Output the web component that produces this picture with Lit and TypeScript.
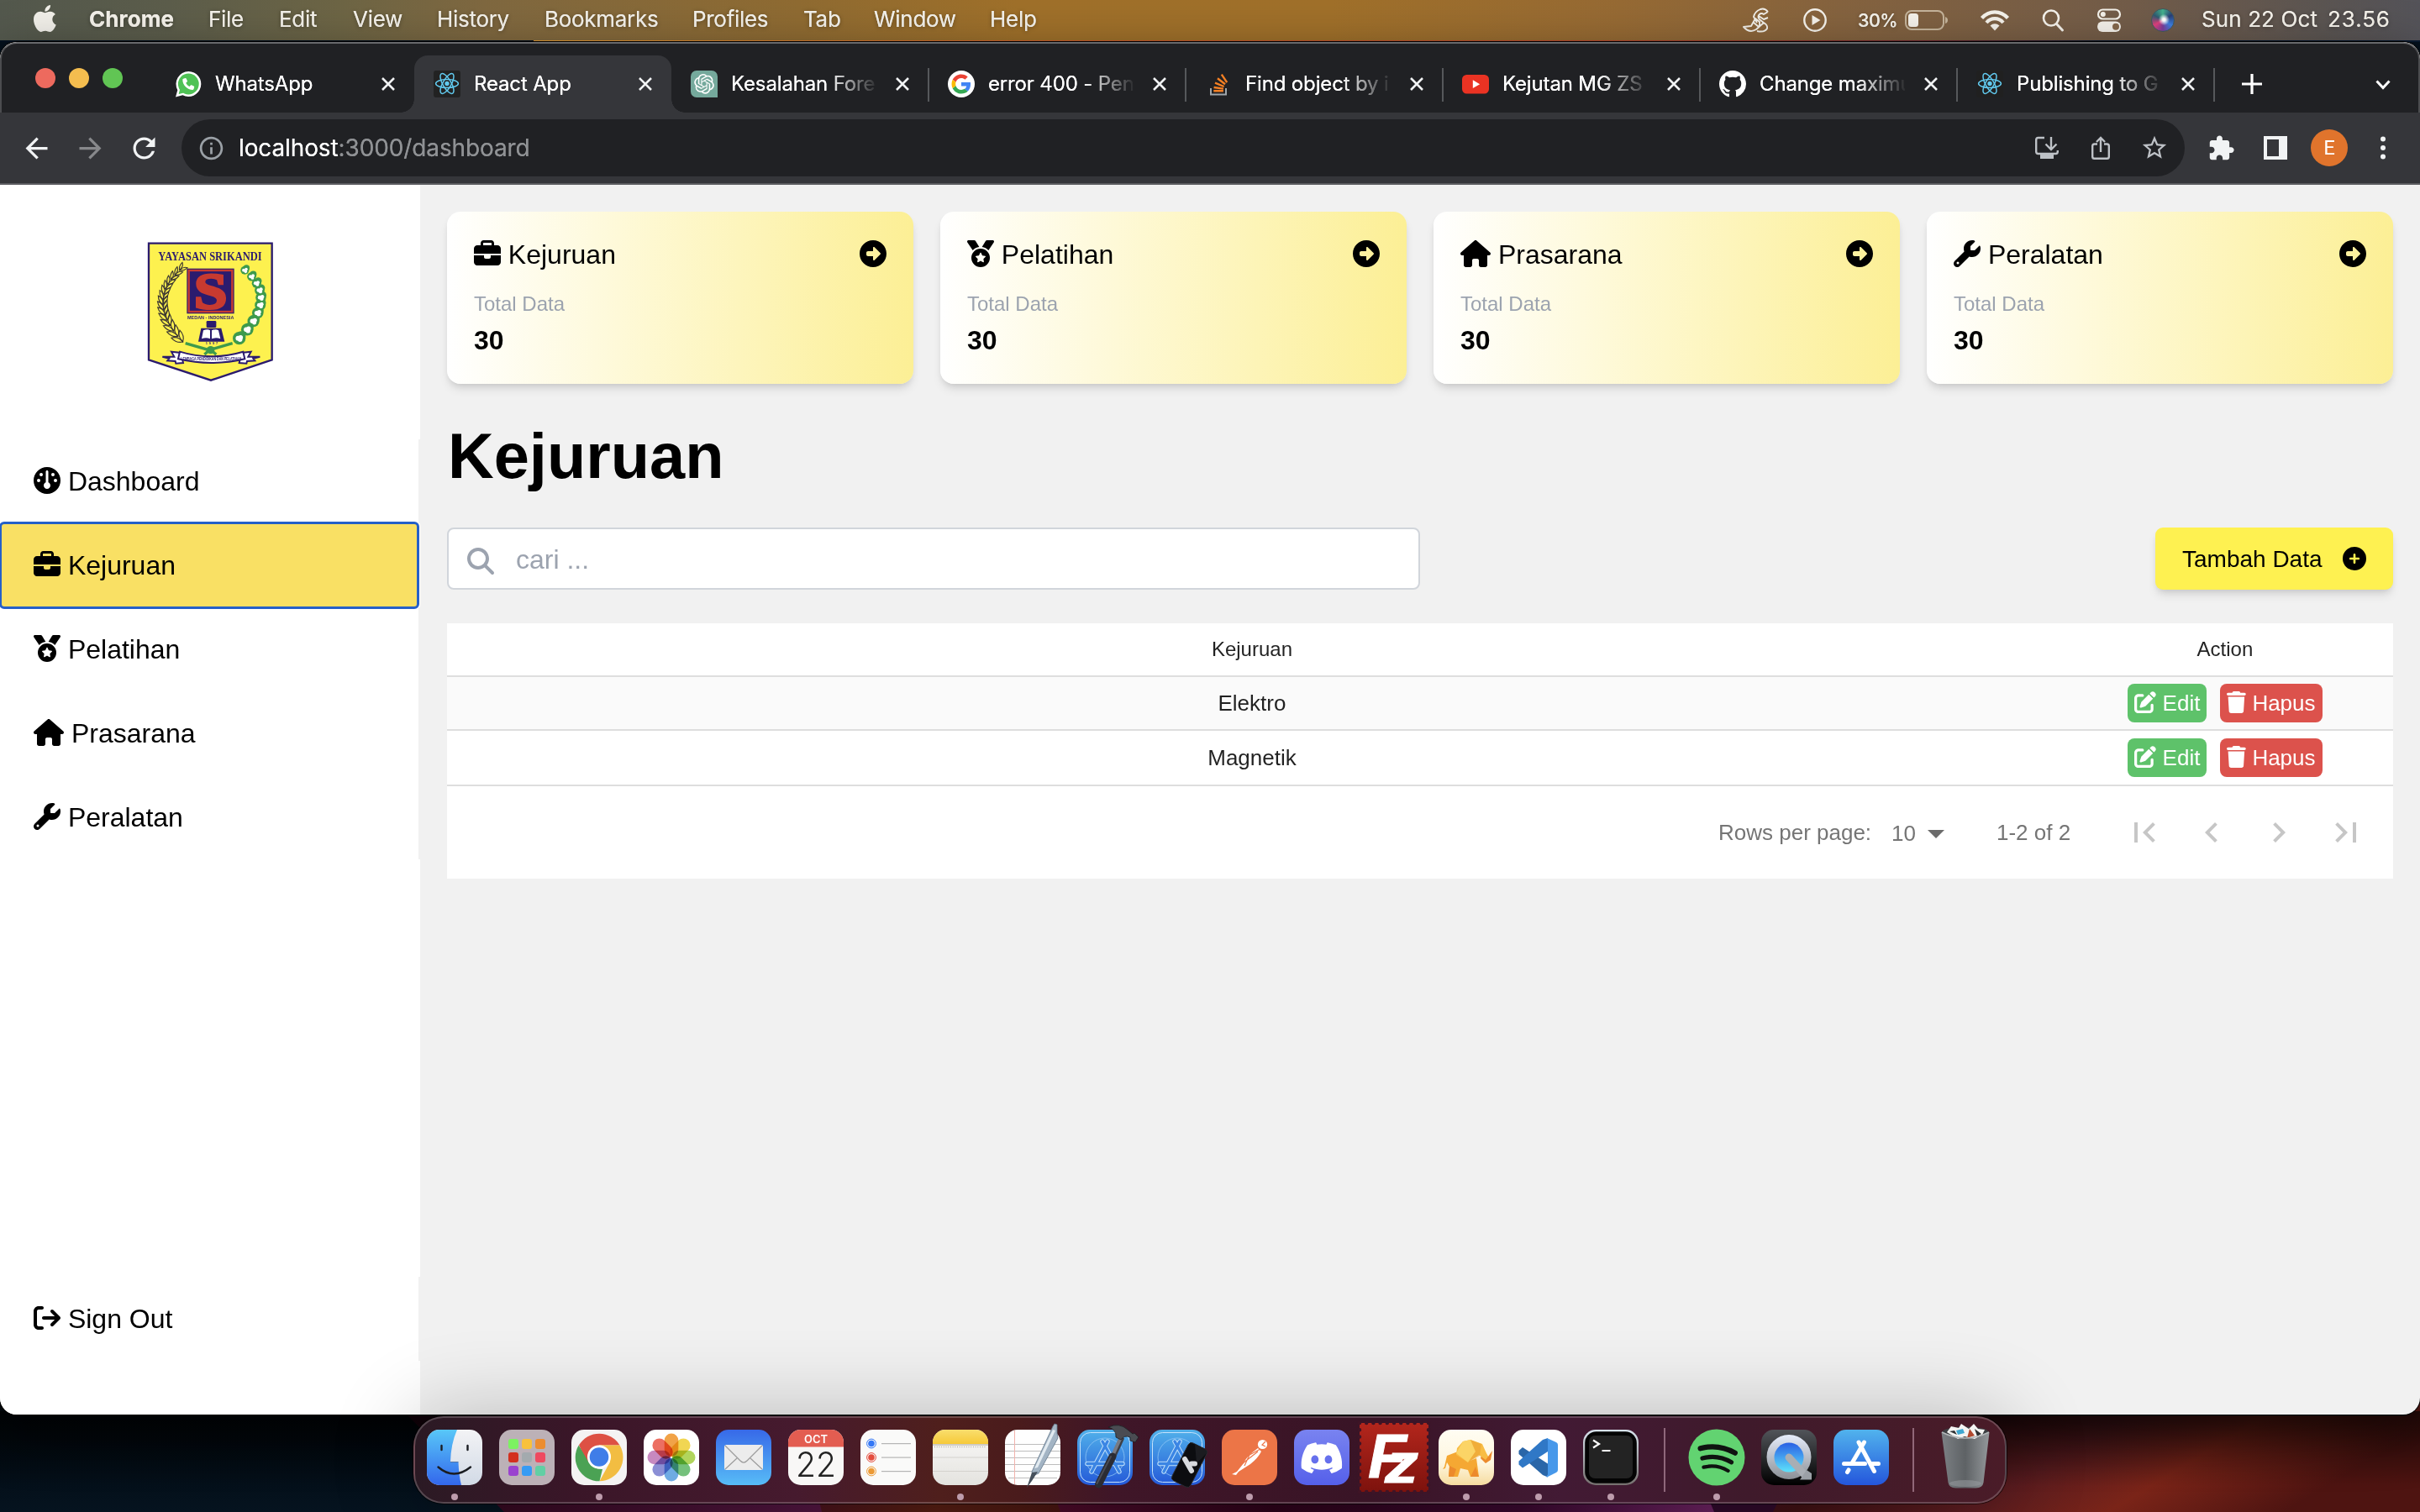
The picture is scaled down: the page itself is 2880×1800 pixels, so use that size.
import { LitElement, html, svg, css } from "lit";
import { customElement } from "lit/decorators.js";
import { styleMap } from "lit/directives/style-map.js";

type Glyph = { w: number; d: string };

const GLYPH: Record<string, Glyph> = {
  gauge: { w: 512, d: "M0 256a256 256 0 1 1 512 0A256 256 0 1 1 0 256zm320 96c0-26.9-16.5-49.9-40-59.3V88c0-13.3-10.7-24-24-24s-24 10.7-24 24V292.7c-23.5 9.5-40 32.5-40 59.3c0 35.3 28.7 64 64 64s64-28.7 64-64zM144 176a32 32 0 1 0 0-64 32 32 0 1 0 0 64zm-16 80a32 32 0 1 0 -64 0 32 32 0 1 0 64 0zm288 32a32 32 0 1 0 0-64 32 32 0 1 0 0 64zM400 144a32 32 0 1 0 -64 0 32 32 0 1 0 64 0z" },
  briefcase: { w: 512, d: "M184 48H328c4.4 0 8 3.6 8 8V96H176V56c0-4.4 3.6-8 8-8zm-56 8V96H64C28.7 96 0 124.7 0 160v96H192 320 512V160c0-35.3-28.7-64-64-64H384V56c0-30.9-25.1-56-56-56H184c-30.9 0-56 25.1-56 56zM512 288H320v32c0 17.7-14.3 32-32 32H224c-17.7 0-32-14.3-32-32V288H0V416c0 35.3 28.7 64 64 64H448c35.3 0 64-28.7 64-64V288z" },
  medal: { w: 512, d: "M4.1 38.2C1.4 34.2 0 29.4 0 24.6C0 11 11 0 24.6 0H133.9c11.2 0 21.7 5.9 27.4 15.5l68.5 114.1c-48.2 6.1-91.3 28.6-123.4 61.9L4.1 38.2zm503.7 0L405.6 191.5c-32.1-33.3-75.2-55.8-123.4-61.9L350.7 15.5C356.5 5.9 366.9 0 378.1 0H487.4C501 0 512 11 512 24.6c0 4.8-1.4 9.6-4.1 13.6zM80 336a176 176 0 1 1 352 0A176 176 0 1 1 80 336zm184.4-94.9c-3.4-7-13.3-7-16.8 0l-22.4 45.4c-1.4 2.8-4 4.7-7 5.1L168 298.9c-7.7 1.1-10.7 10.5-5.2 16l36.3 35.4c2.2 2.2 3.2 5.2 2.7 8.3l-8.6 49.9c-1.3 7.6 6.7 13.5 13.6 9.9l44.8-23.6c2.7-1.4 6-1.4 8.7 0l44.8 23.6c6.9 3.6 14.9-2.2 13.6-9.9l-8.6-49.9c-.5-3 .5-6.1 2.7-8.3l36.3-35.4c5.6-5.4 2.5-14.8-5.2-16l-50.1-7.3c-3-.4-5.7-2.4-7-5.1l-22.4-45.4z" },
  house: { w: 576, d: "M575.8 255.5c0 18-15 32.1-32 32.1h-32l.7 160.2c0 2.7-.2 5.4-.5 8.1V472c0 22.1-17.9 40-40 40H456c-1.1 0-2.2 0-3.3-.1c-1.4 .1-2.8 .1-4.2 .1H416 392c-22.1 0-40-17.9-40-40V448 384c0-17.7-14.3-32-32-32H256c-17.7 0-32 14.3-32 32v64 24c0 22.1-17.9 40-40 40H160 128.1c-1.5 0-3-.1-4.5-.2c-1.2 .1-2.4 .2-3.6 .2H104c-22.1 0-40-17.9-40-40V360c0-.9 0-1.9 .1-2.8V287.6H32c-18 0-32-14-32-32.1c0-9 3-17 10-24L266.4 8c7-7 15-8 22-8s15 2 21 7L564.8 231.5c8 7 12 15 11 24z" },
  wrench: { w: 512, d: "M352 320c88.4 0 160-71.6 160-160c0-15.3-2.2-30.1-6.2-44.2c-3.1-10.8-16.4-13.2-24.3-5.3l-76.8 76.8c-3 3-7.1 4.7-11.3 4.7H336c-8.8 0-16-7.2-16-16V118.6c0-4.2 1.7-8.3 4.7-11.3l76.8-76.8c7.9-7.9 5.4-21.2-5.3-24.3C382.1 2.2 367.3 0 352 0C263.6 0 192 71.6 192 160c0 19.1 3.4 37.5 9.5 54.5L19.9 396.1C7.2 408.8 0 426.1 0 444.1C0 481.6 30.4 512 67.9 512c18 0 35.3-7.2 48-19.9L297.5 310.5c17 6.2 35.4 9.5 54.5 9.5zM80 408a24 24 0 1 1 0 48 24 24 0 1 1 0-48z" },
  circleRight: { w: 512, d: "M0 256C0 397.4 114.6 512 256 512s256-114.6 256-256S397.4 0 256 0S0 114.6 0 256zm395.3 11.3l-112 112c-4.6 4.6-11.5 5.9-17.4 3.5s-9.9-8.3-9.9-14.8l0-64-96 0c-17.7 0-32-14.3-32-32l0-32c0-17.7 14.3-32 32-32l96 0 0-64c0-6.5 3.9-12.3 9.9-14.8s12.9-1.1 17.4 3.5l112 112c6.2 6.2 6.2 16.4 0 22.6z" },
  circlePlus: { w: 512, d: "M256 512A256 256 0 1 0 256 0a256 256 0 1 0 0 512zM232 344V280H168c-13.3 0-24-10.7-24-24s10.7-24 24-24h64V168c0-13.3 10.7-24 24-24s24 10.7 24 24v64h64c13.3 0 24 10.7 24 24s-10.7 24-24 24H280v64c0 13.3-10.7 24-24 24s-24-10.7-24-24z" },
  search: { w: 512, d: "M416 208c0 45.9-14.9 88.3-40 122.7L502.6 457.4c12.5 12.5 12.5 32.8 0 45.3s-32.8 12.5-45.3 0L330.7 376c-34.4 25.2-76.8 40-122.7 40C93.1 416 0 322.9 0 208S93.1 0 208 0S416 93.1 416 208zM208 352a144 144 0 1 0 0-288 144 144 0 1 0 0 288z" },
  edit: { w: 512, d: "M471.6 21.7c-21.9-21.9-57.3-21.9-79.2 0L362.3 51.7l97.9 97.9 30.1-30.1c21.9-21.9 21.9-57.3 0-79.2L471.6 21.7zm-299.2 220c-6.1 6.1-10.8 13.6-13.5 21.9l-29.6 88.8c-2.9 8.6-.6 18.1 5.8 24.6s15.9 8.7 24.6 5.8l88.8-29.6c8.2-2.7 15.7-7.4 21.9-13.5L437.7 172.3 339.7 74.3 172.4 241.7zM96 64C43 64 0 107 0 160V416c0 53 43 96 96 96H352c53 0 96-43 96-96V320c0-17.7-14.3-32-32-32s-32 14.3-32 32v96c0 17.7-14.3 32-32 32H96c-17.7 0-32-14.3-32-32V160c0-17.7 14.3-32 32-32h96c17.7 0 32-14.3 32-32s-14.3-32-32-32H96z" },
  trash: { w: 448, d: "M135.2 17.7L128 32H32C14.3 32 0 46.3 0 64S14.3 96 32 96H416c17.7 0 32-14.3 32-32s-14.3-32-32-32H320l-7.2-14.3C307.4 6.8 296.3 0 284.2 0H163.8c-12.1 0-23.2 6.8-28.6 17.7zM416 128H32L53.2 467c1.6 25.3 22.6 45 47.9 45H346.9c25.3 0 46.3-19.7 47.9-45L416 128z" },
  signOut: { w: 512, d: "M502.6 278.6c12.5-12.5 12.5-32.8 0-45.3l-128-128c-12.5-12.5-32.8-12.5-45.3 0s-12.5 32.8 0 45.3L402.7 224 192 224c-17.7 0-32 14.3-32 32s14.3 32 32 32l210.7 0-73.4 73.4c-12.5 12.5-12.5 32.8 0 45.3s32.8 12.5 45.3 0l128-128zM160 96c17.7 0 32-14.3 32-32s-14.3-32-32-32L96 32C43 32 0 75 0 128L0 384c0 53 43 96 96 96l64 0c17.7 0 32-14.3 32-32s-14.3-32-32-32l-64 0c-17.7 0-32-14.3-32-32l0-256c0-17.7 14.3-32 32-32l64 0z" },
};

const glyph = (name: string) => {
  const g = GLYPH[name];
  return html`<svg class="glyph" viewBox="0 0 ${g.w} 512" style=${styleMap({ width: `${g.w / 512}em` })}><path fill="currentColor" d=${g.d}></path></svg>`;
};

const material = (cls: string, d: string) =>
  html`<svg class=${cls} viewBox="0 0 24 24"><path fill="currentColor" d=${d}></path></svg>`;

const ARROW_BACK = "M20 11H7.83l5.59-5.59L12 4l-8 8 8 8 1.41-1.41L7.83 13H20v-2z";
const ARROW_FORWARD = "M12 4l-1.41 1.41L16.17 11H4v2h12.17l-5.58 5.59L12 20l8-8z";
const RELOAD = "M17.65 6.35C16.2 4.9 14.21 4 12 4c-4.42 0-7.99 3.58-7.99 8s3.57 8 7.99 8c3.73 0 6.84-2.55 7.73-6h-2.08c-.82 2.33-3.04 4-5.65 4-3.31 0-6-2.69-6-6s2.69-6 6-6c1.66 0 3.14.69 4.22 1.78L13 11h7V4l-2.35 2.35z";
const INFO = "M11 7h2v2h-2zm0 4h2v6h-2zm1-9C6.48 2 2 6.48 2 12s4.48 10 10 10 10-4.48 10-10S17.52 2 12 2zm0 18c-4.41 0-8-3.59-8-8s3.59-8 8-8 8 3.59 8 8-3.59 8-8 8z";
const STAR = "M22 9.24l-7.19-.62L12 2 9.19 8.63 2 9.24l5.46 4.73L5.82 21 12 17.27 18.18 21l-1.63-7.03L22 9.24zM12 15.4l-3.76 2.27 1-4.28-3.32-2.88 4.38-.38L12 6.1l1.71 4.04 4.38.38-3.32 2.88 1 4.28L12 15.4z";
const PUZZLE = "M20.5 11H19V7c0-1.1-.9-2-2-2h-4V3.5C13 2.12 11.88 1 10.5 1S8 2.12 8 3.5V5H4c-1.1 0-1.99.9-1.99 2v3.8H3.5c1.49 0 2.7 1.21 2.7 2.7s-1.21 2.7-2.7 2.7H2V20c0 1.1.9 2 2 2h3.8v-1.5c0-1.49 1.21-2.7 2.7-2.7 1.49 0 2.7 1.21 2.7 2.7V22H17c1.1 0 2-.9 2-2v-4h1.5c1.38 0 2.5-1.12 2.5-2.5S21.88 11 20.5 11z";
const PAGE_FIRST = "M18.41 16.59L13.82 12l4.59-4.59L17 6l-6 6 6 6zM6 6h2v12H6z";
const PAGE_PREV = "M15.41 7.41L14 6l-6 6 6 6 1.41-1.41L10.83 12z";
const PAGE_NEXT = "M10 6L8.59 7.41 13.17 12l-4.58 4.59L10 18l6-6z";
const PAGE_LAST = "M5.59 7.41L10.18 12l-4.59 4.59L7 18l6-6-6-6zM16 6h2v12h-2z";

const reactMark = (bg: string) => html`<svg class="favicon" viewBox="0 0 32 32">
  <rect width="32" height="32" rx="3" fill=${bg}></rect>
  <g fill="none" stroke="#61c9ee" stroke-width="1.5">
    <ellipse cx="16" cy="15.5" rx="13.4" ry="5"></ellipse>
    <ellipse cx="16" cy="15.5" rx="13.4" ry="5" transform="rotate(60 16 15.5)"></ellipse>
    <ellipse cx="16" cy="15.5" rx="13.4" ry="5" transform="rotate(120 16 15.5)"></ellipse>
  </g>
  <circle cx="16" cy="15.5" r="2.7" fill="#61c9ee"></circle>
</svg>`;

const FAVICON = {
  whatsapp: html`<svg class="favicon wa" viewBox="0 0 32 32">
    <path fill="#fff" d="M16.4 1A15 15 0 0 0 3.3 23.2L1 31.6l8.4-2.3A15 15 0 1 0 16.4 1z"></path>
    <circle cx="16.3" cy="16" r="12.4" fill="#4fc255"></circle>
    <path fill="#4fc255" d="M4.6 28l1.7-6.2 4.4 4.6z"></path>
    <g transform="translate(9.3 9) scale(.0272)"><path fill="#fff" d="M164.9 24.6c-7.7-18.6-28-28.5-47.4-23.2l-88 24C12.1 30.2 0 46 0 64C0 311.4 200.6 512 448 512c18 0 33.8-12.1 38.6-29.5l24-88c5.3-19.4-4.6-39.7-23.2-47.4l-96-40c-16.3-6.8-35.2-2.1-46.3 11.6L304.7 368C234.3 334.7 177.3 277.7 144 207.3L193.3 167c13.7-11.2 18.4-30 11.6-46.3l-40-96z"></path></g>
  </svg>`,
  react: reactMark("#222"),
  openai: html`<svg class="favicon" viewBox="0 0 32 32">
    <path fill="#75a99c" d="M7 0h18a7 7 0 0 1 7 7v25H7a7 7 0 0 1-7-7V7a7 7 0 0 1 7-7z"></path>
    <g transform="translate(4.2 4) scale(.985)"><path fill="#fff" d="M22.2819 9.8211a5.9847 5.9847 0 0 0-.5157-4.9108 6.0462 6.0462 0 0 0-6.5098-2.9A6.0651 6.0651 0 0 0 4.9807 4.1818a5.9847 5.9847 0 0 0-3.9977 2.9 6.0462 6.0462 0 0 0 .7427 7.0966 5.98 5.98 0 0 0 .511 4.9107 6.051 6.051 0 0 0 6.5146 2.9001A5.9847 5.9847 0 0 0 13.2599 24a6.0557 6.0557 0 0 0 5.7718-4.2058 5.9894 5.9894 0 0 0 3.9977-2.9001 6.0557 6.0557 0 0 0-.7475-7.0729zm-9.022 12.6081a4.4755 4.4755 0 0 1-2.8764-1.0408l.1419-.0804 4.7783-2.7582a.7948.7948 0 0 0 .3927-.6813v-6.7369l2.02 1.1686a.071.071 0 0 1 .038.052v5.5826a4.504 4.504 0 0 1-4.4945 4.4944zm-9.6607-4.1254a4.4708 4.4708 0 0 1-.5346-3.0137l.142.0852 4.783 2.7582a.7712.7712 0 0 0 .7806 0l5.8428-3.3685v2.3324a.0804.0804 0 0 1-.0332.0615L9.74 19.9502a4.4992 4.4992 0 0 1-6.1408-1.6464zM2.3408 7.8956a4.485 4.485 0 0 1 2.3655-1.9728V11.6a.7664.7664 0 0 0 .3879.6765l5.8144 3.3543-2.0201 1.1685a.0757.0757 0 0 1-.071 0l-4.8303-2.7865A4.504 4.504 0 0 1 2.3408 7.872zm16.5963 3.8558L13.1038 8.364 15.1192 7.2a.0757.0757 0 0 1 .071 0l4.8303 2.7913a4.4944 4.4944 0 0 1-.6765 8.1042v-5.6772a.79.79 0 0 0-.407-.667zm2.0107-3.0231l-.142-.0852-4.7735-2.7818a.7759.7759 0 0 0-.7854 0L9.409 9.2297V6.8974a.0662.0662 0 0 1 .0284-.0615l4.8303-2.7866a4.4992 4.4992 0 0 1 6.6802 4.66zM8.3065 12.863l-2.02-1.1638a.0804.0804 0 0 1-.038-.0567V6.0742a4.4992 4.4992 0 0 1 7.3757-3.4537l-.142.0805L8.704 5.459a.7948.7948 0 0 0-.3927.6813zm1.0976-2.3654l2.602-1.4998 2.6069 1.4998v2.9994l-2.5974 1.4997-2.6067-1.4997Z"></path></g>
  </svg>`,
  google: html`<svg class="favicon" viewBox="0 0 32 32">
    <circle cx="16" cy="16" r="16" fill="#fff"></circle>
    <g transform="translate(4.5 4.5) scale(.48)">
      <path fill="#ea4335" d="M24 9.5c3.54 0 6.71 1.22 9.21 3.6l6.85-6.85C35.9 2.38 30.47 0 24 0 14.62 0 6.51 5.38 2.56 13.22l7.98 6.19C12.43 13.72 17.74 9.5 24 9.5z"></path>
      <path fill="#4285f4" d="M46.98 24.55c0-1.57-.15-3.09-.38-4.55H24v9.02h12.94c-.58 2.96-2.26 5.48-4.78 7.18l7.73 6c4.51-4.18 7.09-10.36 7.09-17.65z"></path>
      <path fill="#fbbc05" d="M10.53 28.59c-.48-1.45-.76-2.99-.76-4.59s.27-3.14.76-4.59l-7.98-6.19C.92 16.46 0 20.12 0 24c0 3.88.92 7.54 2.56 10.78l7.97-6.19z"></path>
      <path fill="#34a853" d="M24 48c6.48 0 11.93-2.13 15.89-5.81l-7.73-6c-2.15 1.45-4.92 2.3-8.16 2.3-6.26 0-11.57-4.22-13.47-9.91l-7.98 6.19C6.51 42.62 14.62 48 24 48z"></path>
    </g>
  </svg>`,
  stack: html`<svg class="favicon" viewBox="0 0 32 32">
    <path fill="none" stroke="#9fa6ab" stroke-width="2" d="M7 21v7.5h18V21"></path>
    <g stroke="#f48024" stroke-width="2.4">
      <path d="M10.3 24.3h11.6"></path><path d="M10.6 20l11.4 1.6"></path><path d="M12 14.6l10.6 4.4"></path><path d="M15 9.3l9 7"></path><path d="M19.8 4.6l6.4 9.6"></path>
    </g>
  </svg>`,
  youtube: html`<svg class="favicon" viewBox="0 0 32 32">
    <rect y="5" width="32" height="22.5" rx="5.5" fill="#ea3323"></rect>
    <path fill="#fff" d="M12.8 11.3l8.3 4.9-8.3 4.9z"></path>
  </svg>`,
  github: html`<svg class="favicon" viewBox="0 0 16 16"><path fill="#fff" d="M8 0C3.58 0 0 3.58 0 8c0 3.54 2.29 6.53 5.47 7.59.4.07.55-.17.55-.38 0-.19-.01-.82-.01-1.49-2.01.37-2.53-.49-2.69-.94-.09-.23-.48-.94-.82-1.13-.28-.15-.68-.52-.01-.53.63-.01 1.08.58 1.23.82.72 1.21 1.87.87 2.33.66.07-.52.28-.87.51-1.07-1.78-.2-3.64-.89-3.64-3.95 0-.87.31-1.59.82-2.15-.08-.2-.36-1.02.08-2.12 0 0 .67-.21 2.2.82.64-.18 1.32-.27 2-.27s1.36.09 2 .27c1.53-1.04 2.2-.82 2.2-.82.44 1.1.16 1.92.08 2.12.51.56.82 1.27.82 2.15 0 3.07-1.87 3.75-3.65 3.95.29.25.54.73.54 1.48 0 1.07-.01 1.93-.01 2.2 0 .21.15.46.55.38A8.01 8.01 0 0 0 16 8c0-4.42-3.58-8-8-8z"></path></svg>`,
  react2: reactMark("#202020"),
};

const TABS: { icon: keyof typeof FAVICON; title: string; kind: string }[] = [
  { icon: "whatsapp", title: "WhatsApp", kind: "plain" },
  { icon: "react", title: "React App", kind: "active" },
  { icon: "openai", title: "Kesalahan Fore", kind: "sep" },
  { icon: "google", title: "error 400 - Pen", kind: "sep" },
  { icon: "stack", title: "Find object by i", kind: "sep" },
  { icon: "youtube", title: "Kejutan MG ZS", kind: "sep" },
  { icon: "github", title: "Change maximu", kind: "sep" },
  { icon: "react2", title: "Publishing to G", kind: "sep" },
];

const MENU = ["File", "Edit", "View", "History", "Bookmarks", "Profiles", "Tab", "Window", "Help"];

const NAV = [
  { icon: "gauge", label: "Dashboard" },
  { icon: "briefcase", label: "Kejuruan", active: true },
  { icon: "medal", label: "Pelatihan" },
  { icon: "house", label: "Prasarana" },
  { icon: "wrench", label: "Peralatan" },
];

const CARDS = [
  { icon: "briefcase", label: "Kejuruan", total: 30 },
  { icon: "medal", label: "Pelatihan", total: 30 },
  { icon: "house", label: "Prasarana", total: 30 },
  { icon: "wrench", label: "Peralatan", total: 30 },
];

const ROWS = ["Elektro", "Magnetik"];

const bez = (a: number[], b: number[], c: number[], t: number) => {
  const u = 1 - t;
  return [0, 1].map((i) => u * u * a[i] + 2 * u * t * b[i] + t * t * c[i]);
};

/* Wheat ear: pairs of outlined grains along a bent stalk. */
const wheat = () =>
  Array.from({ length: 15 }, (_, i) => {
    const t = i / 14;
    const a = [194, 152], b = [68, 268], c = [200, 408];
    const p = bez(a, b, c, t);
    const q = bez(a, b, c, Math.min(1, t + 0.02));
    const r = bez(a, b, c, Math.max(0, t - 0.02));
    const ang = (Math.atan2(q[1] - r[1], q[0] - r[0]) * 180) / Math.PI;
    const k = 11 + t * 6;
    return svg`<g transform=${`translate(${p[0]} ${p[1]}) rotate(${ang})`} fill="none" stroke="#3a3632" stroke-width="3.4">
      <path d=${`M4 0Q${-k * 0.4} ${-k * 1.2} ${-k * 2} ${-k * 1.2}Q${-k * 1.4} ${k * 0.1} 4 0z`}></path>
      <path d=${`M4 0Q${-k * 0.4} ${k * 1.2} ${-k * 2} ${k * 1.2}Q${-k * 1.4} ${-k * 0.1} 4 0z`}></path>
    </g>`;
  });

/* Cotton branch: green bolls with white centres. */
const cotton = () => {
  const pts = Array.from({ length: 10 }, (_, i) => {
    const t = i / 9;
    const p = bez([424, 155], [548, 255], [404, 398], t);
    return { x: p[0], y: p[1], r: 15 + t * 8 };
  });
  return svg`${pts.map((p) => svg`<circle cx=${p.x} cy=${p.y} r=${p.r} fill="#3d9a4c"></circle><circle cx=${p.x + 6} cy=${p.y - 8} r=${p.r * 0.75} fill="#3d9a4c"></circle>`)}
    ${pts.map((p) => svg`<g fill="#fff"><circle cx=${p.x - 4} cy=${p.y} r=${p.r * 0.38}></circle><circle cx=${p.x + 5} cy=${p.y - 3} r=${p.r * 0.36}></circle><circle cx=${p.x + 3} cy=${p.y + 5} r=${p.r * 0.36}></circle></g>`)}`;
};

const emblem = () => html`<svg class="emblem" viewBox="0 0 600 600">
  <path fill="#fdf14f" stroke="#2b1b6e" stroke-width="7" d="M81 59h440v416L303 548 81 475z"></path>
  <text x="300" y="121" text-anchor="middle" textLength="370" lengthAdjust="spacingAndGlyphs" font-family="'Liberation Serif', serif" font-weight="700" font-size="44" fill="#2b1b6e">YAYASAN SRIKANDI</text>
  ${wheat()} ${cotton()}
  <path stroke="#3d9a4c" stroke-width="10" fill="none" d="M212 416l84 24 84-24M302 432v14M280 456l20-18 22 18"></path>
  <circle cx="302" cy="440" r="14" fill="#3d9a4c"></circle>
  <rect x="217" y="149" width="169" height="161" fill="#2b1b6e"></rect>
  <rect x="224" y="156" width="155" height="147" fill="none" stroke="#c73a30" stroke-width="7"></rect>
  <text x="302" y="291" text-anchor="middle" textLength="118" lengthAdjust="spacingAndGlyphs" font-family="'Liberation Serif', serif" font-weight="700" font-size="182" fill="#c73a30" stroke="#c73a30" stroke-width="9">S</text>
  <text x="302" y="329" text-anchor="middle" textLength="166" lengthAdjust="spacingAndGlyphs" font-family="'Liberation Sans', sans-serif" font-weight="700" font-size="16" fill="#2b1b6e">MEDAN - INDONESIA</text>
  <rect x="287" y="336" width="35" height="24" rx="4" fill="#2b1b6e"></rect>
  <path fill="#2b1b6e" d="M268 362h72l12 48h-94z"></path>
  <path fill="#fff" d="M276 370q16-6 24 0v30q-14-6-30 0zM306 370q14-6 24 0l7 30q-16-6-31 0z"></path>
  <text x="306" y="420" text-anchor="middle" textLength="44" font-family="'Liberation Sans', sans-serif" font-size="12" font-weight="700" fill="#2b1b6e">1997</text>
  <path fill="#fff" stroke="#2b1b6e" stroke-width="6" d="M130 464h42l-10-18 34 4 8 36-26 2-2-8-28-2 6-8z"></path>
  <path fill="#fff" stroke="#2b1b6e" stroke-width="6" d="M478 464h-42l10-18-34 4-8 36 26 2 2-8 28-2-6-8z"></path>
  <path fill="#fff" stroke="#2b1b6e" stroke-width="6" d="M192 446q110 34 226 0l6 26q-118 28-238 0z"></path>
  <text x="304" y="478" text-anchor="middle" textLength="216" lengthAdjust="spacingAndGlyphs" font-family="'Liberation Sans', sans-serif" font-size="15" font-weight="700" fill="#2b1b6e">LEMBAGA PENDIDIKAN DAN PELATIHAN</text>
</svg>`;

const blueprint = (id: string) => svg`
  <defs><linearGradient id=${id} x2="0" y2="1"><stop offset="0" stop-color="#51b1ea"></stop><stop offset="1" stop-color="#2459d8"></stop></linearGradient></defs>
  <rect width="66" height="66" rx="15" fill=${`url(#${id})`}></rect>
  <rect x="3.5" y="3.5" width="59" height="59" rx="12" fill="none" stroke="#c5e2fb" stroke-width="1"></rect>
  <circle cx="33" cy="33" r="23" fill="none" stroke="#8fc6f5" stroke-width=".8"></circle>
  <g fill="none" stroke="#bfe0fb" stroke-width="5.4" stroke-linecap="round"><path d="M36 14L17 50M30 14l20 36M12 40.5h42"></path></g>
  <g fill="none" stroke="#3b85e4" stroke-width="3.4" stroke-linecap="round"><path d="M36 14L17 50M30 14l20 36M12 40.5h42"></path></g>`;

const PETALS = ["#f0962e", "#efd13a", "#a6cf45", "#62b96a", "#5b9fe0", "#7b7fd0", "#c079b8", "#ea5b4c"];

const DOCK: Record<string, unknown> = {
  finder: html`<svg class="app" viewBox="0 0 66 66"><defs>
      <linearGradient id="fa" x2="0" y2="1"><stop offset="0" stop-color="#58c7f8"></stop><stop offset="1" stop-color="#3367ec"></stop></linearGradient>
      <linearGradient id="fb" x2="0" y2="1"><stop offset="0" stop-color="#f3f3f5"></stop><stop offset="1" stop-color="#d2dae6"></stop></linearGradient>
      <clipPath id="fc"><rect width="66" height="66" rx="15"></rect></clipPath></defs>
    <g clip-path="url(#fc)"><rect width="66" height="66" fill="url(#fb)"></rect>
    <path fill="url(#fa)" d="M0 0h36Q28.5 17 28 38.5h9.5Q38 54 41 66H0z"></path>
    <path fill="none" stroke="#16305c" stroke-width="1.2" opacity=".5" d="M28 38.5h9.5"></path>
    <path fill="none" stroke="#1b1d22" stroke-width="2.4" stroke-linecap="round" d="M17.5 19v5M48.5 19v5M13.5 44.5q18.5 16 38.5 0"></path></g></svg>`,
  launchpad: html`<svg class="app" viewBox="0 0 66 66"><rect width="66" height="66" rx="15" fill="#bcb1b7"></rect>
    ${["#7cf261", "#f8c13c", "#ec8d31", "#d3301f", "#a3aaae", "#ef4a60", "#9a42cf", "#369bf4", "#62cfa4"].map(
      (c, i) => svg`<rect x=${11 + (i % 3) * 16} y=${11 + Math.floor(i / 3) * 16} width="12" height="12" rx="3" fill=${c}></rect>`)}</svg>`,
  chrome: html`<svg class="app" viewBox="0 0 66 66"><rect width="66" height="66" rx="15" fill="#f4f3f3"></rect>
    <path fill="#dd5144" d="M9 18.3A28.3 28.3 0 0 1 57.5 18.5H33l-14 22z"></path>
    <path fill="#f2bd42" d="M57.5 18.5A28.3 28.3 0 0 1 33.5 61.3L46 38.5 33 18.5z"></path>
    <path fill="#4ba254" d="M33.5 61.3A28.3 28.3 0 0 1 8.7 18.5L21 39.5q6 8 16 7.5z"></path>
    <circle cx="33" cy="32.5" r="14" fill="#fff"></circle><circle cx="33" cy="32.5" r="11.3" fill="#3f7de8"></circle></svg>`,
  photos: html`<svg class="app" viewBox="0 0 66 66"><rect width="66" height="66" rx="15" fill="#fff"></rect>
    <g class="blend">${PETALS.map((c, i) => svg`<rect class="petal" x="24.7" y="4.5" width="16.6" height="27.5" rx="8.3" fill=${c} transform=${`rotate(${i * 45} 33 33)`}></rect>`)}</g></svg>`,
  mail: html`<svg class="app" viewBox="0 0 66 66"><defs><linearGradient id="ma" x2="0" y2="1"><stop offset="0" stop-color="#3769e8"></stop><stop offset="1" stop-color="#57bcf7"></stop></linearGradient></defs>
    <rect width="66" height="66" rx="15" fill="url(#ma)"></rect><rect x="10" y="18" width="46" height="30" rx="2.5" fill="#ececec"></rect>
    <path fill="none" stroke="#9c9c9c" stroke-width="1.2" d="M11 19l18 18q4 4 8 0l18-18M11 47l14-13M55 47L41 34"></path></svg>`,
  calendar: html`<svg class="app" viewBox="0 0 66 66"><defs><clipPath id="cc"><rect width="66" height="66" rx="15"></rect></clipPath></defs>
    <g clip-path="url(#cc)"><rect width="66" height="66" fill="#f8f7f6"></rect><rect width="66" height="20.5" fill="#e35d51"></rect></g>
    <text x="33" y="15.8" text-anchor="middle" textLength="28" lengthAdjust="spacingAndGlyphs" font-family="Inter, sans-serif" font-weight="600" font-size="13.5" fill="#fff">OCT</text>
    <text x="33" y="56" text-anchor="middle" textLength="48" lengthAdjust="spacingAndGlyphs" font-family="Inter, sans-serif" font-weight="300" font-size="41" fill="#222">22</text></svg>`,
  reminders: html`<svg class="app" viewBox="0 0 66 66"><rect width="66" height="66" rx="15" fill="#fafaf9"></rect>
    ${["#3478f6", "#e44c3d", "#ec9a35"].map((c, i) => svg`<circle cx="13" cy=${16.5 + i * 16.5} r="5.4" fill="none" stroke=${c} stroke-width="1"></circle><circle cx="13" cy=${16.5 + i * 16.5} r="3.8" fill=${c}></circle><rect x="25" y=${16 + i * 16.5} width="35" height="1.2" fill="#b5b5b5"></rect>`)}</svg>`,
  notes: html`<svg class="app" viewBox="0 0 66 66"><defs><clipPath id="nc"><rect width="66" height="66" rx="15"></rect></clipPath>
      <linearGradient id="na" x2="0" y2="1"><stop offset="0" stop-color="#f9de6e"></stop><stop offset="1" stop-color="#f6c938"></stop></linearGradient>
      <linearGradient id="nb" x2="0" y2="1"><stop offset="0" stop-color="#faf9f8"></stop><stop offset="1" stop-color="#e4e3df"></stop></linearGradient></defs>
    <g clip-path="url(#nc)"><rect width="66" height="66" fill="url(#nb)"></rect><rect width="66" height="17" fill="url(#na)"></rect><path stroke="#a8a49a" stroke-width="1.2" d="M0 18h66"></path>
    <path stroke="#b7b3ab" stroke-width="1.6" stroke-dasharray="1 1.7" d="M2 20.5h62"></path><path stroke="#d4d2ce" stroke-width="1" d="M0 33h66M0 49.5h66"></path></g></svg>`,
  textedit: html`<svg class="app" viewBox="0 0 66 66"><rect width="66" height="66" rx="15" fill="#fefefe"></rect>
    <path stroke="#bdbdbd" stroke-width="1" d="M0 17.5h66M0 25.5h66M0 33.5h66M0 41.5h66M0 49.5h66M4 57.5h58"></path><path stroke="#f2b3ad" stroke-width="1" d="M11.5 1v64"></path>
    <path fill="#a3b4c4" stroke="#64788c" stroke-width=".8" d="M57-4l2-3 3 1 0 4 0 6 1 6-23 42-7 3-1-5z"></path><path fill="#e3ebf1" d="M57 0l3 1-21 44-4 1z"></path><path fill="#46505c" d="M32 51l7-1-7 11-6 8z"></path></svg>`,
  xcode: html`<svg class="app" viewBox="0 0 66 66">${blueprint("xa")}
    <path stroke="#777b84" stroke-width="6" d="M53 9L43 31"></path><path stroke="#3c3e45" stroke-width="2.4" d="M55 10L45 32"></path><path stroke="#2b2c33" stroke-width="9" stroke-linecap="round" d="M42 32L25.5 65"></path><path stroke="#4a4c54" stroke-width="2" stroke-linecap="round" d="M40 32L23.5 64"></path>
    <path fill="#4a4c52" stroke="#1c1d21" stroke-width=".8" d="M37-3Q50-9 60 0l6 5 2-1 5 5-4 6-6-2 0-4Q56 6 52 12l-6-3Q47 0 37-3z"></path></svg>`,
  simulator: html`<svg class="app" viewBox="0 0 66 66">${blueprint("sa")}
    <path fill="#0c0d10" stroke="#2a2c31" d="M52 16l14 7q4 2 2 6L49 66q-2 4-6 2l-14-7q-4-2-2-6L46 18q2-4 6-2z"></path><path fill="#1b1c20" d="M54 17l12 6q3 2 2 5L56 40z"></path>
    <path stroke="#d8dade" stroke-width="6" stroke-linecap="round" d="M42 35l8 14M50 40.5h4"></path></svg>`,
  postman: html`<svg class="app" viewBox="0 0 66 66"><rect width="66" height="66" rx="15" fill="#ec7547"></rect>
    <g fill="#fff"><circle cx="48.5" cy="17.5" r="5.6"></circle><path d="M43 22l4 4q-4 8-13 15l-14 9-3 4-5-1 6-3 8-10q3-8 17-18z"></path></g><path fill="none" stroke="#ec7547" stroke-width="1.2" d="M22 36l24-13M25 40l18-14M33 30l-6 13M52 14l-4 4 4 2"></path></svg>`,
  discord: html`<svg class="app" viewBox="0 0 66 66"><defs><linearGradient id="da" x2="0" y2="1"><stop offset="0" stop-color="#7983f0"></stop><stop offset="1" stop-color="#5560ea"></stop></linearGradient></defs>
    <rect width="66" height="66" rx="15" fill="url(#da)"></rect><g transform="translate(6.5 12.5) scale(.0825)"><path fill="#fff" d="M524.531,69.836a1.5,1.5,0,0,0-.764-.7A485.065,485.065,0,0,0,404.081,32.03a1.816,1.816,0,0,0-1.923.91,337.461,337.461,0,0,0-14.9,30.6,447.848,447.848,0,0,0-134.426,0,309.541,309.541,0,0,0-15.135-30.6,1.89,1.89,0,0,0-1.924-.91A483.689,483.689,0,0,0,116.085,69.137a1.712,1.712,0,0,0-.788.676C39.068,183.651,18.186,294.69,28.43,404.354a2.016,2.016,0,0,0,.765,1.375A487.666,487.666,0,0,0,176.02,479.918a1.9,1.9,0,0,0,2.063-.676A348.2,348.2,0,0,0,208.12,430.4a1.86,1.86,0,0,0-1.019-2.588,321.173,321.173,0,0,1-45.868-21.853,1.885,1.885,0,0,1-.185-3.126c3.082-2.309,6.166-4.711,9.109-7.137a1.819,1.819,0,0,1,1.9-.256c96.229,43.917,200.41,43.917,295.5,0a1.812,1.812,0,0,1,1.924.233c2.944,2.426,6.027,4.851,9.132,7.16a1.884,1.884,0,0,1-.162,3.126,301.407,301.407,0,0,1-45.89,21.83,1.875,1.875,0,0,0-1,2.611,391.055,391.055,0,0,0,30.014,48.815,1.864,1.864,0,0,0,2.063.7A486.048,486.048,0,0,0,610.7,405.729a1.882,1.882,0,0,0,.765-1.352C623.729,277.594,590.933,167.465,524.531,69.836ZM222.491,337.58c-28.972,0-52.844-26.587-52.844-59.239S193.056,219.1,222.491,219.1c29.665,0,53.306,26.82,52.843,59.239C275.334,310.993,251.924,337.58,222.491,337.58Zm195.38,0c-28.971,0-52.843-26.587-52.843-59.239S388.437,219.1,417.871,219.1c29.667,0,53.307,26.82,52.844,59.239C470.715,310.993,447.538,337.58,417.871,337.58Z"></path></g></svg>`,
  filezilla: html`<svg class="app wide" viewBox="0 0 82 82"><defs><linearGradient id="za" x2="0" y2="1"><stop offset="0" stop-color="#b3261c"></stop><stop offset="1" stop-color="#7d120d"></stop></linearGradient></defs>
    <rect x="0" y="0" width="82" height="82" fill="url(#za)"></rect><rect x="0" y="0" width="82" height="82" fill="none" stroke="#3f1426" stroke-width="4.5" stroke-dasharray="0 8.2" stroke-linecap="round"></rect>
    <text font-family="'Liberation Sans', sans-serif" font-weight="700" font-style="italic" fill="#fff" stroke="#fff" stroke-width="1"><tspan x="10" y="65" font-size="75" textLength="46" lengthAdjust="spacingAndGlyphs">F</tspan><tspan x="30" y="71" font-size="66" textLength="40" lengthAdjust="spacingAndGlyphs">z</tspan></text></svg>`,
  elephant: html`<svg class="app" viewBox="0 0 66 66"><defs><linearGradient id="ea" x2="0" y2="1"><stop offset="0" stop-color="#fffdf3"></stop><stop offset=".6" stop-color="#fef6df"></stop><stop offset="1" stop-color="#f6dca0"></stop></linearGradient></defs>
    <rect width="66" height="66" rx="15" fill="url(#ea)"></rect>
    <path fill="#f5a833" d="M10 31l13-5 12 12 10-4 3 22H38l-3-8-9-2-3 10H12l1-12-3-5-2 7-3 1 2-3z"></path>
    <path fill="#ec8a2c" d="M13 43l8 4-3 9h-6zM38 56l6-12 4 12zM53 24l6 8 5-7-2 11-6 4-6-6z"></path>
    <path fill="#f8bd45" d="M22 22l7-8 9-2 14 5 4 9 3 6-3 4-8-6-13 9-14-9z"></path>
    <path fill="#fbd466" d="M29 14l9-2 6 14-9 13-14-11z"></path><path fill="#e9a131" d="M38 12l6 14-9 13 14-8 2-14z" opacity=".55"></path></svg>`,
  vscode: html`<svg class="app" viewBox="0 0 66 66"><rect width="66" height="66" rx="15" fill="#fff"></rect>
    <path fill="#2a66a8" d="M14 21l-4.5 4v4L38 54l6 2.5v-16z"></path><path fill="#3078c6" d="M14 45.5L9.5 41.5v-4L38 12l6-2v16z"></path><path fill="#4798ea" d="M43 10l11 5q2 1 2 3v30q0 2-2 3l-11 5.5q-2-.5 1-3V13q-1-2-1-3z"></path></svg>`,
  terminal: html`<svg class="app" viewBox="0 0 66 66"><defs><linearGradient id="ta" x2="0" y2="1"><stop offset="0" stop-color="#d8e4ee"></stop><stop offset="1" stop-color="#75706e"></stop></linearGradient></defs>
    <rect width="66" height="66" rx="15" fill="url(#ta)"></rect><rect x="2.2" y="2.2" width="61.6" height="61.6" rx="13.5" fill="#040404"></rect><rect x="7" y="7" width="52" height="51" rx="7" fill="#232323"></rect>
    <path fill="none" stroke="#fff" stroke-width="2.2" d="M12 12.5l7 4.5-7 4.5M22.5 25h10"></path></svg>`,
  spotify: html`<svg class="app" viewBox="-1 -1 68 68"><circle cx="33" cy="33" r="34.5" fill="#62d371"></circle>
    <g fill="none" stroke="#0f1310" stroke-linecap="round"><path stroke-width="6.4" d="M13 22q22-6 42.5 5.5"></path><path stroke-width="5.4" d="M15.5 34q19-5 35.5 5"></path><path stroke-width="4.4" d="M17 45q16-4 30 4.5"></path></g></svg>`,
  quicktime: html`<svg class="app" viewBox="0 0 66 66"><defs><linearGradient id="qa" x2="0" y2="1"><stop offset="0" stop-color="#515459"></stop><stop offset="1" stop-color="#000"></stop></linearGradient>
      <linearGradient id="qb" x2="0" y2="1"><stop offset="0" stop-color="#e6ecfa"></stop><stop offset="1" stop-color="#8b9096"></stop></linearGradient>
      <linearGradient id="qc" x2="0" y2="1"><stop offset="0" stop-color="#2a5fe4"></stop><stop offset="1" stop-color="#5ee3fb"></stop></linearGradient></defs>
    <rect width="66" height="66" rx="15" fill="url(#qa)"></rect><circle cx="33" cy="32.5" r="26.5" fill="url(#qb)"></circle><circle cx="33" cy="33" r="17.5" fill="url(#qc)"></circle>
    <path stroke="#a9aeb4" stroke-width="9" stroke-linecap="round" d="M33 33l19 21"></path><path fill="#9ba0a6" d="M46 59.5h14V52l-6-4z"></path></svg>`,
  appstore: html`<svg class="app" viewBox="0 0 66 66"><defs><linearGradient id="aa" x2="0" y2="1"><stop offset="0" stop-color="#51b3ed"></stop><stop offset="1" stop-color="#2456dc"></stop></linearGradient></defs>
    <rect width="66" height="66" rx="15" fill="url(#aa)"></rect><g fill="none" stroke="#fff" stroke-width="5" stroke-linecap="round"><path d="M36.5 15L22.5 39M30 15l18.5 34.5M12.5 40.5h25M46 40.5h7.5M18 48l-1.5 2.5"></path></g></svg>`,
  trash: html`<svg class="app tall" viewBox="0 0 66 78"><defs><linearGradient id="tb" x2="1" y2="0"><stop offset="0" stop-color="#7c8084"></stop><stop offset=".5" stop-color="#5e6265"></stop><stop offset="1" stop-color="#94989b"></stop></linearGradient></defs>
    <ellipse cx="33" cy="10.5" rx="28" ry="7" fill="#3c3f42"></ellipse>
    <path fill="url(#tb)" d="M4.5 10q28 14 57 0l-7 60q-1 6-9 6.5H21.5q-8-.5-9-6.5z"></path><ellipse cx="33" cy="71" rx="19" ry="4" fill="#9a9ea1" opacity=".5"></ellipse>
    <path fill="#f4f4f2" d="M11 10l5-7 9 2 3-5 9 6 6-6 5 6 8 1-3 6-9 5-12-3-8 3z"></path><path fill="#3fa7d0" d="M22 8l8-2 2 5-8 2z"></path><path fill="#b0492f" d="M38 6l6 8-9 3z"></path><path fill="#2f3133" d="M14 9l6-1 3 5zM44 6l8 6-5 3z"></path><path fill="none" stroke="#b4b8ba" stroke-width="1.4" d="M5 10q28 14 56 0"></path></svg>`,
};

const DOCK_ORDER: { id: string; running?: boolean }[] = [
  { id: "finder", running: true }, { id: "launchpad" }, { id: "chrome", running: true }, { id: "photos" }, { id: "mail" },
  { id: "calendar" }, { id: "reminders" }, { id: "notes", running: true }, { id: "textedit" }, { id: "xcode" },
  { id: "simulator" }, { id: "postman", running: true }, { id: "discord" }, { id: "filezilla" },
  { id: "elephant", running: true }, { id: "vscode", running: true }, { id: "terminal", running: true },
  { id: "|" }, { id: "spotify", running: true }, { id: "quicktime" }, { id: "appstore" }, { id: "|" }, { id: "trash" },
];

@customElement("app-root")
export class AppRoot extends LitElement {
  static styles = css`
    :host {
      display: flex; flex-direction: column; width: 2880px; height: 1800px; position: relative; overflow: hidden;
      background: #04101b; isolation: isolate; --sys: Inter, Roboto, sans-serif; --app: "Liberation Sans", Arial, sans-serif;
    }
    * { box-sizing: border-box; }
    svg { display: block; overflow: visible; flex: none; }
    .wallpaper { position: absolute; left: 0; bottom: 0; width: 2880px; height: 140px; z-index: -1; }

    .menubar {
      height: 48px; flex: none; display: flex; align-items: center; padding: 0 36px 0 40px; color: #f4f1ea;
      font: 400 26px/44px var(--sys); letter-spacing: -.3px; text-shadow: 0 1px 5px rgba(0,0,0,.35), 0 0 .6px #f4f1ea;
      background: linear-gradient(90deg, #53584d 0, #5c5d4b 7%, #6d6545 14%, #7f6840 20%, #8f6b32 33%, #9f702a 42%, #a0702a 55%, #966a34 67%, #85633f 76%, #725c49 88%, #5b5552 96%, #545359 100%);
    }
    .apple { width: 26px; height: 32px; margin: -5px 0 0 0; }
    .menus { display: grid; grid-template-columns: 142px 84px 88px 100px 128px 176px 132px 84px 138px auto; margin-left: 40px; padding-bottom: 2px; white-space: nowrap; }
    .menus b { font-weight: 700; letter-spacing: .1px; }
    .status { margin-left: auto; display: grid; align-items: center; grid-template-columns: 72px 65px 56px 90px 73px 66px 64px 60px 150px 74px; height: 48px; white-space: nowrap; }
    .clock { letter-spacing: .1px; padding-bottom: 2px; }
    .clock.time { letter-spacing: .9px; }
    .pct { font-size: 21.5px; font-weight: 500; letter-spacing: -.5px; }
    .siri { width: 28px; height: 28px; border-radius: 50%; background: radial-gradient(circle at 55% 48%, #fff 0 8%, rgba(255,255,255,0) 34%), conic-gradient(from 0deg, #43b28e, #2a3f77, #3c7fe0, #7b3d9a, #e0407c, #305a70, #43b28e); border: 1.5px solid #3e5a5e; }
    .rule { height: 2px; flex: none; background: linear-gradient(90deg, #051221 0 635px, #e09a35 635px, #d98a30 800px, #c95a28 1250px, #b8452a 1900px, #6b2430 2300px, #0a1a30 2500px, #0a1a30); }

    .window { height: 1634px; flex: none; border-radius: 20px; overflow: hidden; display: flex; flex-direction: column; background: #f1f1f1; box-shadow: 0 0 0 1px #000, 0 20px 60px rgba(0,0,0,.5); }
    .tabs { height: 84px; flex: none; background: #202124; display: flex; border-top: 2px solid #68696c; border-left: 2px solid #4b4c4f; border-right: 2px solid #4b4c4f; border-radius: 20px 20px 0 0; padding-left: 40px; }
    .lights { display: flex; gap: 16px; padding-top: 29px; width: 145px; }
    .light { width: 24px; height: 24px; border-radius: 50%; }
    .red { background: #ed6a5e; } .amber { background: #f4bd4f; } .green { background: #61c554; }
    .tab { width: 306px; height: 82px; padding: 14px 0 0 22px; display: flex; }
    .tabbox { display: flex; align-items: center; height: 68px; flex: 1; position: relative; padding-left: 1px; }
    .plain .tabbox { padding-left: 0; }
    .plain .x { margin-left: 25px; }
    .active { padding: 14px 0 0; position: relative; }
    .active .tabbox { background: #35363a; border-radius: 16px 16px 0 0; padding-left: 23px; }
    .active::before, .active::after { content: ""; position: absolute; bottom: 0; width: 16px; height: 16px; }
    .active::before { left: -16px; background: radial-gradient(circle at 0 0, transparent 15.5px, #35363a 16px); }
    .active::after { right: -16px; background: radial-gradient(circle at 100% 0, transparent 15.5px, #35363a 16px); }
    .sep .tabbox::after { content: ""; position: absolute; right: -1px; top: 15px; width: 2px; height: 40px; background: #56585b; }
    .favicon { width: 32px; height: 32px; }
    .wa { margin-left: -1px; }
    .title { margin-left: 16px; width: 173px; overflow: hidden; white-space: nowrap; color: #fff; font: 400 24px/34px var(--sys); letter-spacing: -.15px; text-shadow: 0 0 .6px #fff; -webkit-mask-image: linear-gradient(90deg, #000 115px, transparent 176px); mask-image: linear-gradient(90deg, #000 115px, transparent 176px); }
    .plain .title, .active .title { -webkit-mask-image: none; mask-image: none; }
    .x { width: 16px; height: 16px; margin-left: 23px; }
    .plus { width: 24px; height: 24px; margin: 36px 0 0 33px; }
    .caret { width: 18px; height: 12px; margin: 43px 33px 0 auto; }

    .toolbar { height: 86px; flex: none; background: #35363a; border-bottom: 2px solid #5b5c60; display: flex; align-items: center; color: #f1f3f4; padding-left: 24px; }
    .tool { width: 39px; height: 39px; }
    .tool + .tool { margin-left: 25px; }
    .dim { color: #87888b; }
    .omni { margin-left: 25px; width: 2384px; height: 68px; border-radius: 34px; background: #202124; display: flex; align-items: center; color: #bdc1c6; padding-left: 19px; }
    .info { width: 33px; height: 33px; color: #9aa0a6; }
    .url { margin-left: 16px; font: 400 28px/40px var(--sys); color: #8f9194; letter-spacing: -.12px; text-shadow: 0 0 .6px currentColor; }
    .url b { font-weight: 400; color: #fff; }
    .omniicons { margin-left: auto; display: flex; align-items: center; padding-right: 19px; }
    .star { width: 34px; height: 34px; margin-left: 36px; }
    .install { width: 28px; height: 28px; } .share { width: 22px; height: 28px; margin-left: 39px; }
    .puzzle { width: 33px; height: 33px; margin-left: 27px; }
    .panel { width: 28px; height: 28px; margin-left: 34px; border: 4px solid #f1f3f4; border-right-width: 10px; border-left-width: 4px; }
    .avatar { width: 44px; height: 44px; border-radius: 50%; background: #e0742c; margin-left: 28px; text-align: center; color: #fff; font: 400 24px/44px Roboto, sans-serif; }
    .dots { width: 6px; height: 28px; margin-left: 39px; }

    .body { flex: 1; display: flex; font-family: var(--app); color: #000; min-height: 0; }
    .side { width: 500px; background: #fff; display: flex; flex-direction: column; padding: 50px 0 64px; }
    .emblem { width: 200px; height: 200px; margin: 0 0 53px 150px; }
    .glyph { display: inline-block; height: 1em; vertical-align: -.125em; }
    .item { height: 100px; line-height: 100px; font-size: 32px; padding-left: 40px; border-right: 2px solid #f1f1f1; white-space: nowrap; }
    .item.on { background: #f9e064; border-right: 0; width: 496px; margin-left: 1px; padding-left: 39px; outline: 3px solid #2560c8; outline-offset: -1px; border-radius: 4px; }
    .out { margin-top: auto; }
    .main { flex: 1; padding: 32px; }
    .cards { display: grid; grid-template-columns: repeat(4, 1fr); gap: 32px; }
    .card { height: 205px; border-radius: 16px; padding: 32px; background: linear-gradient(90deg, #fff, #fcef95); box-shadow: 0 8px 12px -2px rgba(0,0,0,.1), 0 4px 8px -4px rgba(0,0,0,.14); }
    .head { display: flex; justify-content: space-between; font-size: 32px; line-height: 38px; }
    .label { margin-top: 24px; font-size: 24px; line-height: 32px; color: #9ca3af; }
    .value { margin-top: 7px; font-size: 32px; line-height: 40px; font-weight: 700; }
    h1 { margin: 0; height: 171px; padding-left: 1px; display: flex; align-items: center; font-size: 75.8px; line-height: 1; font-weight: 700; }
    .bar { display: flex; justify-content: space-between; height: 74px; }
    .search { width: 1158px; border: 2px solid #d1d5db; border-radius: 8px; background: #fff; display: flex; align-items: center; padding-left: 22px; gap: 26px; font-size: 32px; color: #9ca3af; }
    .search .glyph { margin-top: 6px; }
    .search span { line-height: 40px; margin-top: 1px; }
    .add { width: 283px; border-radius: 9px; background: #fef151; display: flex; align-items: center; justify-content: space-between; padding: 0 32px; font-size: 28px; box-shadow: 0 8px 12px -2px rgba(0,0,0,.1), 0 4px 8px -4px rgba(0,0,0,.14); }
    .add span { margin-top: 1px; }
    .table { margin-top: 40px; background: #fff; color: rgba(0,0,0,.87); }
    .row { height: 64px; border-bottom: 2px solid #dedede; display: grid; grid-template-columns: 1916px 400px; align-items: center; text-align: center; font-size: 26px; }
    .row.th { font-size: 24px; } .row.odd { background: #fafafa; } .row.last { height: 66px; }
    .acts { display: flex; justify-content: center; gap: 16px; }
    .btn { height: 46px; line-height: 46px; border-radius: 8px; padding: 0 8px; color: #fff; white-space: nowrap; }
    .ok { background: #5ec26a; } .del { background: #dc524c; }
    .foot { height: 110px; display: flex; align-items: center; font-size: 26px; color: #757575; padding: 0 16px 0 1513px; white-space: nowrap; }
    .size { margin: 2px 0 0 24px; }
    .tri { width: 20px; height: 10px; margin: 3px 0 0 14px; }
    .range { margin-left: 62px; width: 136px; }
    .pg { width: 48px; height: 48px; margin: 0 16px; color: #c6c6c6; }

    .dock { position: relative; flex: none; width: 1896px; height: 104px; margin: 2px 0 0 492px; border-radius: 36px; border: 2px solid rgba(255,255,255,.2); display: flex; padding-left: 4px;
      background: linear-gradient(90deg, #2b1a24 0, #3a1628 10%, #461a2e 24%, #4f1f1c 33%, #4a1b1c 38%, #3f1628 44%, #391426 60%, #421a34 72%, #3f1a2b 84%, #4a1c28 100%);
      box-shadow: 0 0 100px 2px rgba(0,0,0,.24), 0 0 0 1px rgba(0,0,0,.6); }
    .slot { width: 86px; display: flex; flex-direction: column; align-items: center; }
    .app { width: 66px; height: 66px; margin-top: 14px; }
    .wide { width: 82px; height: 82px; margin-top: 6px; }
    .tall { height: 78px; margin-top: 7px; }
    .blend { isolation: isolate; }
    .petal { opacity: .88; mix-blend-mode: multiply; }
    .dot { width: 8px; height: 8px; border-radius: 50%; background: #bd9cac; margin-top: 10px; }
    .line { width: 40px; padding: 12px 0 0 20px; } .line::before { content: ""; display: block; width: 2px; height: 76px; background: rgba(220,180,200,.5); }
    .line.two { width: 38px; padding-left: 18px; }
  `;

  private menuBar() {
    return html`<div class="menubar">
      <svg class="apple" viewBox="4 32 366 448"><path fill="#f1efe9" d="M318.7 268.7c-.2-36.7 16.4-64.4 50-84.8-18.8-26.9-47.2-41.7-84.7-44.6-35.5-2.8-74.3 20.7-88.5 20.7-15 0-49.4-19.7-76.4-19.7C63.3 141.2 4 184.8 4 273.5q0 39.3 14.4 81.2c12.8 36.7 59 126.7 107.2 125.2 25.2-.6 43-17.9 75.8-17.9 31.8 0 48.3 17.9 76.4 17.9 48.6-.7 90.4-82.5 102.6-119.3-65.2-30.7-61.7-90-61.7-91.9zm-56.6-164.2c27.3-32.4 24.8-61.9 24-72.5-24.1 1.4-52 16.4-67.9 34.9-17.5 19.8-27.8 44.3-25.6 71.9 26.1 2 49.9-11.4 69.5-34.3z"></path></svg>
      <div class="menus"><b>Chrome</b>${MENU.map((m) => html`<span>${m}</span>`)}</div>
      <div class="status">
        <svg width="32" height="30" viewBox="0 0 32 30"><g fill="none" stroke="#f1efe9" stroke-width="1.9" stroke-linejoin="round"><path d="M30 5q-4-5-9-3-7 3-8 9l4 7M30 5l-5 3q-3-2-5 0-3 3 0 6l6 5M30 12l-5 2-6-4M1 23l9-1 5-9 5 4q1 6-4 9-8 5-15-3zM16 26l9-8q5 3 4 7-3 5-12 3M12 17l7 6"></path></g></svg>
        <svg width="28" height="28" viewBox="0 0 28 28"><circle cx="14" cy="14" r="12.7" fill="none" stroke="#f4f1ea" stroke-width="2.4"></circle><path fill="#f4f1ea" d="M10.5 8l10 6-10 6z"></path></svg>
        <span class="pct">30%</span>
        <svg width="51" height="24" viewBox="0 0 51 24"><rect x="1" y="1" width="45" height="22" rx="7" fill="none" stroke="#c5b49b" stroke-width="2"></rect><rect x="4" y="4" width="12" height="16" rx="3.5" fill="#f4f1ea"></rect><path fill="#c5b49b" d="M48 8q3 1 3 4t-3 4z"></path></svg>
        <svg width="34" height="24" viewBox="0 0 34 24"><path fill="none" stroke="#f4f1ea" stroke-width="4.2" d="M1.5 9.5Q8 2.3 17 2.3t15.5 7.2M7 15Q11 10.2 17 10.2T27 15"></path><path fill="#f4f1ea" d="M17 24.5l-5.5-6q2.5-2.3 5.5-2.3t5.5 2.3z"></path></svg>
        <svg width="27" height="28" viewBox="0 0 27 28"><circle cx="11" cy="11.5" r="9" fill="none" stroke="#f4f1ea" stroke-width="2.6"></circle><path stroke="#f4f1ea" stroke-width="3" stroke-linecap="round" d="M17.5 18.5l7 7.5"></path></svg>
        <svg width="28" height="28" viewBox="0 0 28 28"><rect x="1" y="1.5" width="26" height="11" rx="5.5" fill="none" stroke="#f4f1ea" stroke-width="2.2"></rect><circle cx="6.8" cy="7" r="3" fill="#f4f1ea"></circle><rect x="0" y="15.5" width="28" height="12.5" rx="6.2" fill="#f4f1ea"></rect><circle cx="22" cy="21.7" r="4" fill="#85684b"></circle></svg>
        <div class="siri"></div>
        <span class="clock">Sun 22 Oct</span><span class="clock time">23.56</span>
      </div>
    </div>`;
  }

  private chrome() {
    return html`<div class="tabs">
        <div class="lights"><i class="light red"></i><i class="light amber"></i><i class="light green"></i></div>
        ${TABS.map((t) => html`<div class="tab ${t.kind}"><div class="tabbox">${FAVICON[t.icon]}<span class="title">${t.title}</span>
          <svg class="x" viewBox="0 0 16 16"><path stroke="#f1f3f4" stroke-width="2.6" d="M1 1l14 14M15 1L1 15"></path></svg></div></div>`)}
        <svg class="plus" viewBox="0 0 24 24"><path stroke="#fff" stroke-width="3.2" d="M12 0v24M0 12h24"></path></svg>
        <svg class="caret" viewBox="0 0 18 12"><path fill="none" stroke="#fff" stroke-width="3" d="M1.5 1.5L9 9.5l7.5-8"></path></svg>
      </div>
      <div class="toolbar">
        ${material("tool", ARROW_BACK)} ${material("tool dim", ARROW_FORWARD)} ${material("tool", RELOAD)}
        <div class="omni">${material("info", INFO)}<span class="url"><b>localhost</b>:3000/dashboard</span>
          <div class="omniicons">
            <svg class="install" viewBox="0 0 28 28"><g fill="none" stroke="#bdc1c6" stroke-width="2.4"><path d="M11 2H3.5Q1.2 2 1.2 4.5v14q0 2.5 2.3 2.5h21q2.3 0 2.3-2.5V17M19 1v14M12.5 9.5l6.5 6.5 6.5-6.5"></path></g><path fill="#bdc1c6" d="M6 21h16v6H6z"></path></svg>
            <svg class="share" viewBox="0 0 22 28"><g fill="none" stroke="#bdc1c6" stroke-width="2.4"><path d="M7 9.5H3.5Q1.2 9.5 1.2 12v12.5q0 2.3 2.3 2.3h15q2.3 0 2.3-2.3V12q0-2.5-2.3-2.5H15M11 19V2M6 7l5-5 5 5"></path></g></svg>
            ${material("star", STAR)}
          </div>
        </div>
        ${material("puzzle", PUZZLE)}
        <div class="panel"></div>
        <div class="avatar">E</div>
        <svg class="dots" viewBox="0 0 6 28"><g fill="#f1f3f4"><circle cx="3" cy="3.5" r="3"></circle><circle cx="3" cy="14" r="3"></circle><circle cx="3" cy="24.5" r="3"></circle></g></svg>
      </div>`;
  }

  private page() {
    return html`<div class="body">
      <div class="side">
        ${emblem()}
        ${NAV.map((n) => html`<div class="item ${n.active ? "on" : ""}">${glyph(n.icon)} ${n.label}</div>`)}
        <div class="item out">${glyph("signOut")} Sign Out</div>
      </div>
      <div class="main">
        <div class="cards">
          ${CARDS.map((c) => html`<div class="card">
            <div class="head"><span>${glyph(c.icon)} ${c.label}</span><span>${glyph("circleRight")}</span></div>
            <div class="label">Total Data</div><div class="value">${c.total}</div>
          </div>`)}
        </div>
        <h1>Kejuruan</h1>
        <div class="bar">
          <div class="search">${glyph("search")}<span>cari ...</span></div>
          <div class="add"><span>Tambah Data</span>${glyph("circlePlus")}</div>
        </div>
        <div class="table">
          <div class="row th"><span>Kejuruan</span><span>Action</span></div>
          ${ROWS.map((r, i) => html`<div class="row ${i === 0 ? "odd" : "last"}"><span>${r}</span>
            <div class="acts"><span class="btn ok">${glyph("edit")} Edit</span><span class="btn del">${glyph("trash")} Hapus</span></div></div>`)}
          <div class="foot">
            <span>Rows per page:</span><span class="size">10</span>
            <svg class="tri" viewBox="0 0 20 10"><path fill="#6b6b6b" d="M0 0h20L10 10z"></path></svg>
            <span class="range">1-2 of 2</span>
            ${[PAGE_FIRST, PAGE_PREV, PAGE_NEXT, PAGE_LAST].map((d) => material("pg", d))}
          </div>
        </div>
      </div>
    </div>`;
  }

  private dock() {
    let lines = 0;
    return html`<div class="dock">${DOCK_ORDER.map((a) =>
      a.id === "|" ? html`<div class="line ${lines++ ? "two" : ""}"></div>`
        : html`<div class="slot">${DOCK[a.id]}${a.running ? html`<i class="dot"></i>` : ""}</div>`)}</div>`;
  }

  render() {
    return html`
      <svg class="wallpaper" viewBox="0 0 2880 140" preserveAspectRatio="none">
        <defs>
          <linearGradient id="w1" x2="0" y2="1"><stop offset="0" stop-color="#02060b"></stop><stop offset="1" stop-color="#05131f"></stop></linearGradient>
          <linearGradient id="w2"><stop offset="0" stop-color="#2a0516"></stop><stop offset="1" stop-color="#501640"></stop></linearGradient>
          <linearGradient id="w3"><stop offset="0" stop-color="#43101a"></stop><stop offset=".5" stop-color="#521d12"></stop><stop offset="1" stop-color="#431410"></stop></linearGradient>
          <linearGradient id="w4"><stop offset="0" stop-color="#4c0c2a"></stop><stop offset=".35" stop-color="#2a0318"></stop><stop offset=".7" stop-color="#36082c"></stop><stop offset="1" stop-color="#6a2360"></stop></linearGradient>
          <linearGradient id="w5" y2=".3"><stop offset="0" stop-color="#4a0a2a"></stop><stop offset=".3" stop-color="#3c1013"></stop><stop offset=".55" stop-color="#5a1c20"></stop><stop offset=".75" stop-color="#7a2418"></stop><stop offset="1" stop-color="#4e1411"></stop></linearGradient>
          <linearGradient id="w6" x2="0" y2="1"><stop offset="0" stop-color="#000" stop-opacity=".6"></stop><stop offset="1" stop-color="#000" stop-opacity="0"></stop></linearGradient>
        </defs>
        <rect width="2880" height="140" fill="url(#w1)"></rect>
        <path fill="url(#w2)" d="M480 20L600 140h400V20z"></path>
        <path fill="url(#w3)" d="M950 20l28 120h300V20z"></path>
        <path fill="url(#w4)" d="M1220 20l42 120h800l-60-120z"></path>
        <path fill="#2c0a28" d="M1990 20l50 120h100V20z"></path>
        <path fill="url(#w5)" d="M2180 0l-70 140h770V0z"></path>
        <rect y="20" width="2880" height="90" fill="url(#w6)"></rect>
      </svg>
      ${this.menuBar()}
      <div class="rule"></div>
      <div class="window">${this.chrome()}${this.page()}</div>
      ${this.dock()}
    `;
  }
}
